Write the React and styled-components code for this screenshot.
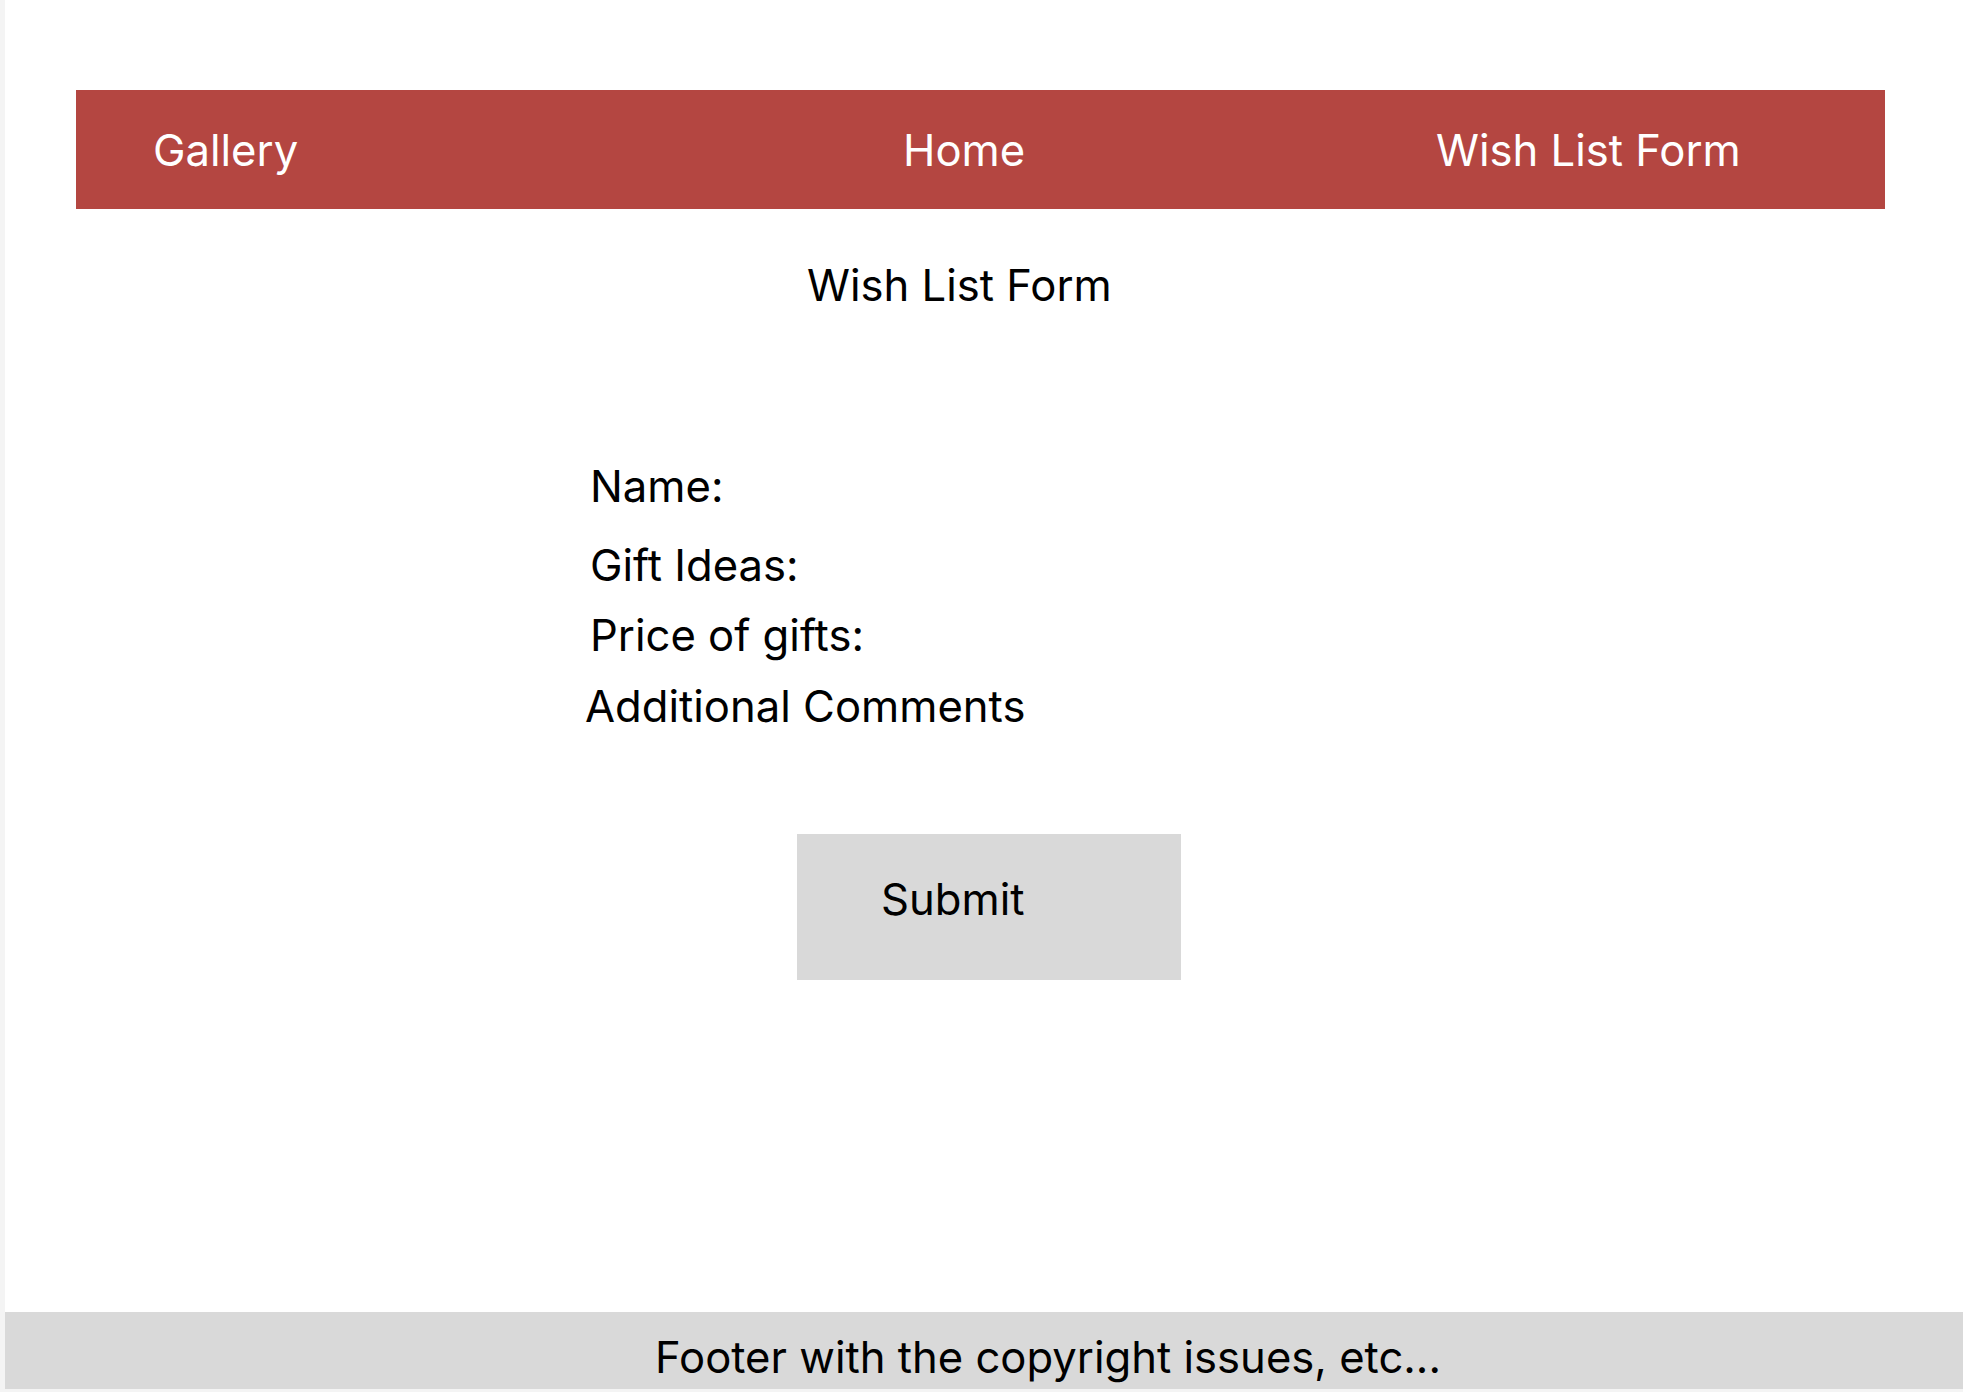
import React from "react";
import styled, { createGlobalStyle } from "styled-components";

const GlobalStyle = createGlobalStyle`
  html, body {
    margin: 0;
    padding: 0;
    background: #f4f4f4;
  }
  body {
    font-family: Inter, "Noto Sans", "Liberation Sans", sans-serif;
    -webkit-font-smoothing: antialiased;
  }
  * { box-sizing: border-box; }
`;

const FONT = 43.6;

const Frame = styled.div`
  margin-left: 5px;
  height: 1389px;
  background: #ffffff;
  display: flex;
  flex-direction: column;
  overflow: hidden;
`;

const Nav = styled.nav`
  margin: 90px 78px 0 71px;
  height: 119px;
  background: #b44641;
  display: grid;
  grid-template-columns: 750px 533px auto;
  align-items: center;
  padding: 2px 0 0 77px;
`;

const NavLink = styled.a`
  color: #ffffff;
  font-size: ${FONT}px;
  line-height: 1;
  text-decoration: none;
  white-space: nowrap;
`;

const Title = styled.h1`
  margin: 55px 0 0 802px;
  font-size: ${FONT}px;
  font-weight: 400;
  line-height: 1;
  color: #000;
`;

const Fields = styled.div`
  display: flex;
  flex-direction: column;
  margin-top: 157px;
`;

const FieldLabel = styled.label`
  display: block;
  font-size: ${FONT}px;
  line-height: 1;
  color: #000;
  margin-left: ${(p) => p.$x}px;
  margin-top: ${(p) => p.$gap}px;
  white-space: nowrap;
`;

const SubmitButton = styled.button`
  margin: 106px 0 0 792px;
  width: 384px;
  height: 146px;
  border: none;
  border-radius: 0;
  background: #d9d9d9;
  font-family: inherit;
  font-size: ${FONT}px;
  line-height: 1;
  color: #000;
  text-align: left;
  display: flex;
  align-items: flex-start;
  padding: 44px 0 0 84px;
  cursor: pointer;
`;

const Footer = styled.footer`
  margin-top: auto;
  height: 77px;
  background: #d9d9d9;
  padding: 24px 0 0 650px;
  font-size: ${FONT}px;
  line-height: 1;
  color: #000;
  white-space: nowrap;
`;

const fields = [
  { text: "Name:", x: 585, gap: 0 },
  { text: "Gift Ideas:", x: 585, gap: 35.5 },
  { text: "Price of gifts:", x: 585, gap: 26.75 },
  { text: "Additional Comments", x: 580, gap: 27 },
];

export default function App() {
  return (
    <>
      <GlobalStyle />
      <Frame>
        <Nav>
          <NavLink href="#">Gallery</NavLink>
          <NavLink href="#">Home</NavLink>
          <NavLink href="#">Wish List Form</NavLink>
        </Nav>
        <Title>Wish List Form</Title>
        <Fields>
          {fields.map((f) => (
            <FieldLabel key={f.text} $x={f.x} $gap={f.gap}>
              {f.text}
            </FieldLabel>
          ))}
        </Fields>
        <div>
          <SubmitButton type="button">Submit</SubmitButton>
        </div>
        <Footer>Footer with the copyright issues, etc...</Footer>
      </Frame>
    </>
  );
}
